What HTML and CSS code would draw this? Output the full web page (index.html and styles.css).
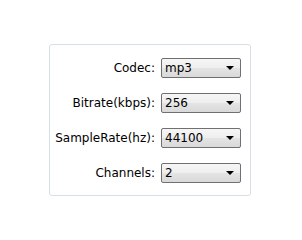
FILE: index.html
```html
<!DOCTYPE html>
<html>
<head>
<meta charset="utf-8">
<link rel="stylesheet" href="styles.css">
</head>
<body>
<div class="panel">
  <label class="lbl">Codec:</label>
  <div class="combo"><span class="val">mp3</span><span class="arrow"></span></div>
  <label class="lbl">Bitrate(kbps):</label>
  <div class="combo"><span class="val">256</span><span class="arrow"></span></div>
  <label class="lbl">SampleRate(hz):</label>
  <div class="combo"><span class="val">44100</span><span class="arrow"></span></div>
  <label class="lbl">Channels:</label>
  <div class="combo"><span class="val">2</span><span class="arrow"></span></div>
</div>
</body>
</html>
```
FILE: styles.css
```css
html, body {
  margin: 0;
  padding: 0;
  background: #ffffff;
}
body {
  font-family: "DejaVu Sans", sans-serif;
  font-size: 12px;
  color: #000;
}
.panel {
  margin: 44px 0 0 49px;
  width: 202px;
  box-sizing: border-box;
  border: 1px solid #d5dfe5;
  border-radius: 3px;
  padding: 13px 9px 12px 0;
  display: grid;
  grid-template-columns: 1fr 80px;
  column-gap: 6px;
  row-gap: 15px;
  align-items: center;
}
.lbl {
  text-align: right;
  white-space: nowrap;
}
.combo {
  height: 20px;
  box-sizing: border-box;
  border: 1px solid #707070;
  border-radius: 2px;
  background: linear-gradient(#f6f6f6, #eeeeee 50%, #e4e4e4 51%, #d9d9d9);
  display: flex;
  align-items: center;
  justify-content: space-between;
  padding: 0 6px 0 3px;
}
.arrow {
  width: 0;
  height: 0;
  border-left: 4px solid transparent;
  border-right: 4px solid transparent;
  border-top: 4px solid #000;
}
```
